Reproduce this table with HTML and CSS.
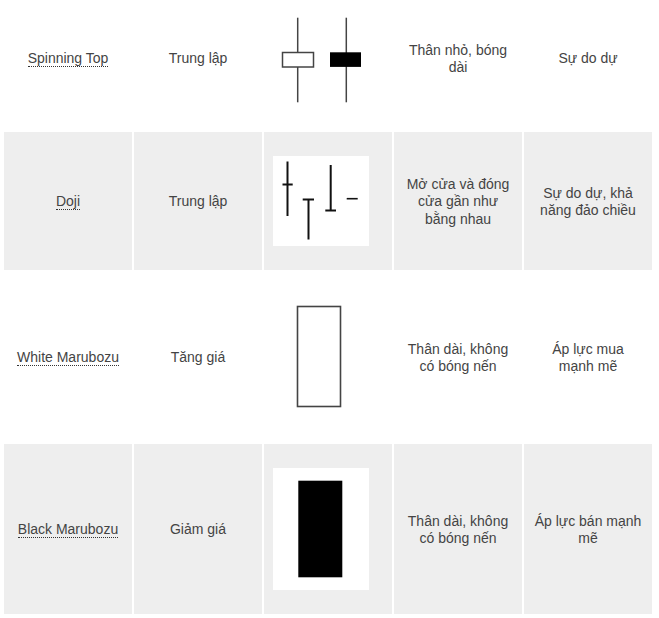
FILE: index.html
```html
<!DOCTYPE html>
<html lang="vi">
<head>
<meta charset="utf-8">
<title>Mô hình nến</title>
<link rel="stylesheet" href="styles.css">
</head>
<body>
<div class="wrap">
<table class="candles">
  <tbody>
    <tr class="row-light">
      <td><a class="term">Spinning Top</a></td>
      <td>Trung lập</td>
      <td class="pic">
        <svg class="img img-96" viewBox="0 0 96 96" width="96" height="96">
          <rect x="0" y="0" width="96" height="96" fill="#fff"/>
          <line x1="24.7" y1="7.7" x2="24.7" y2="92.3" stroke="#444" stroke-width="1.5"/>
          <rect x="9.5" y="42.5" width="31" height="14.5" fill="#fff" stroke="#444" stroke-width="1.5"/>
          <line x1="73.3" y1="7.7" x2="73.3" y2="92.3" stroke="#444" stroke-width="1.5"/>
          <rect x="57" y="42.3" width="31" height="14.6" fill="#000"/>
        </svg>
      </td>
      <td>Thân nhỏ, bóng dài</td>
      <td>Sự do dự</td>
    </tr>
    <tr class="row-grey">
      <td><a class="term">Doji</a></td>
      <td>Trung lập</td>
      <td class="pic">
        <svg class="img" viewBox="0 0 96 90" width="96" height="90">
          <rect x="0" y="0" width="96" height="90" fill="#fff"/>
          <g stroke="#111" stroke-width="2">
            <line x1="14.5" y1="5.5" x2="14.5" y2="60"/>
            <line x1="9.5" y1="28.5" x2="19.7" y2="28.5"/>
            <line x1="35.5" y1="43.5" x2="35.5" y2="83.5"/>
            <line x1="29.7" y1="43.5" x2="41" y2="43.5"/>
            <line x1="57.7" y1="9" x2="57.7" y2="54.5"/>
            <line x1="52.3" y1="54.5" x2="63" y2="54.5"/>
            <line x1="73.7" y1="42.7" x2="84.7" y2="42.7" stroke-width="1.6"/>
          </g>
        </svg>
      </td>
      <td>Mở cửa và đóng cửa gần như bằng nhau</td>
      <td>Sự do dự, khả năng đảo chiều</td>
    </tr>
    <tr class="row-light">
      <td><a class="term">White Marubozu</a></td>
      <td>Tăng giá</td>
      <td class="pic">
        <svg class="img" viewBox="0 0 96 122" width="96" height="122">
          <rect x="0" y="0" width="96" height="122" fill="#fff"/>
          <rect x="24.5" y="10.5" width="43" height="100" fill="#fff" stroke="#444" stroke-width="1.6"/>
        </svg>
      </td>
      <td>Thân dài, không có bóng nến</td>
      <td>Áp lực mua mạnh mẽ</td>
    </tr>
    <tr class="row-grey">
      <td><a class="term">Black Marubozu</a></td>
      <td>Giảm giá</td>
      <td class="pic">
        <svg class="img" viewBox="0 0 96 122" width="96" height="122">
          <rect x="0" y="0" width="96" height="122" fill="#fff"/>
          <rect x="25.3" y="12.7" width="44" height="96.6" fill="#000"/>
        </svg>
      </td>
      <td>Thân dài, không có bóng nến</td>
      <td>Áp lực bán mạnh mẽ</td>
    </tr>
  </tbody>
</table>
</div>
</body>
</html>
```

FILE: styles.css
```css
html, body {
  margin: 0;
  padding: 0;
  background: #fff;
}

.wrap {
  padding: 0 2px;
  overflow: hidden;
  height: 618px;
}

.candles {
  margin-top: -16px;
  width: 652px;
  table-layout: fixed;
  border-collapse: separate;
  border-spacing: 2px;
  font-family: "Liberation Sans", Arial, sans-serif;
  font-size: 14px;
  line-height: 1.25;
  color: #444;
}

.candles td {
  padding: 25px 10px 23px;
  text-align: center;
  vertical-align: middle;
}

.row-grey td {
  background: #eee;
}

.row-light td {
  background: #fff;
}

.candles td.pic {
  padding: 24px 9px;
  text-align: left;
}

.img {
  display: block;
}

.term {
  color: #444;
  text-decoration: none;
  border-bottom: 1px dotted #333;
}
```
